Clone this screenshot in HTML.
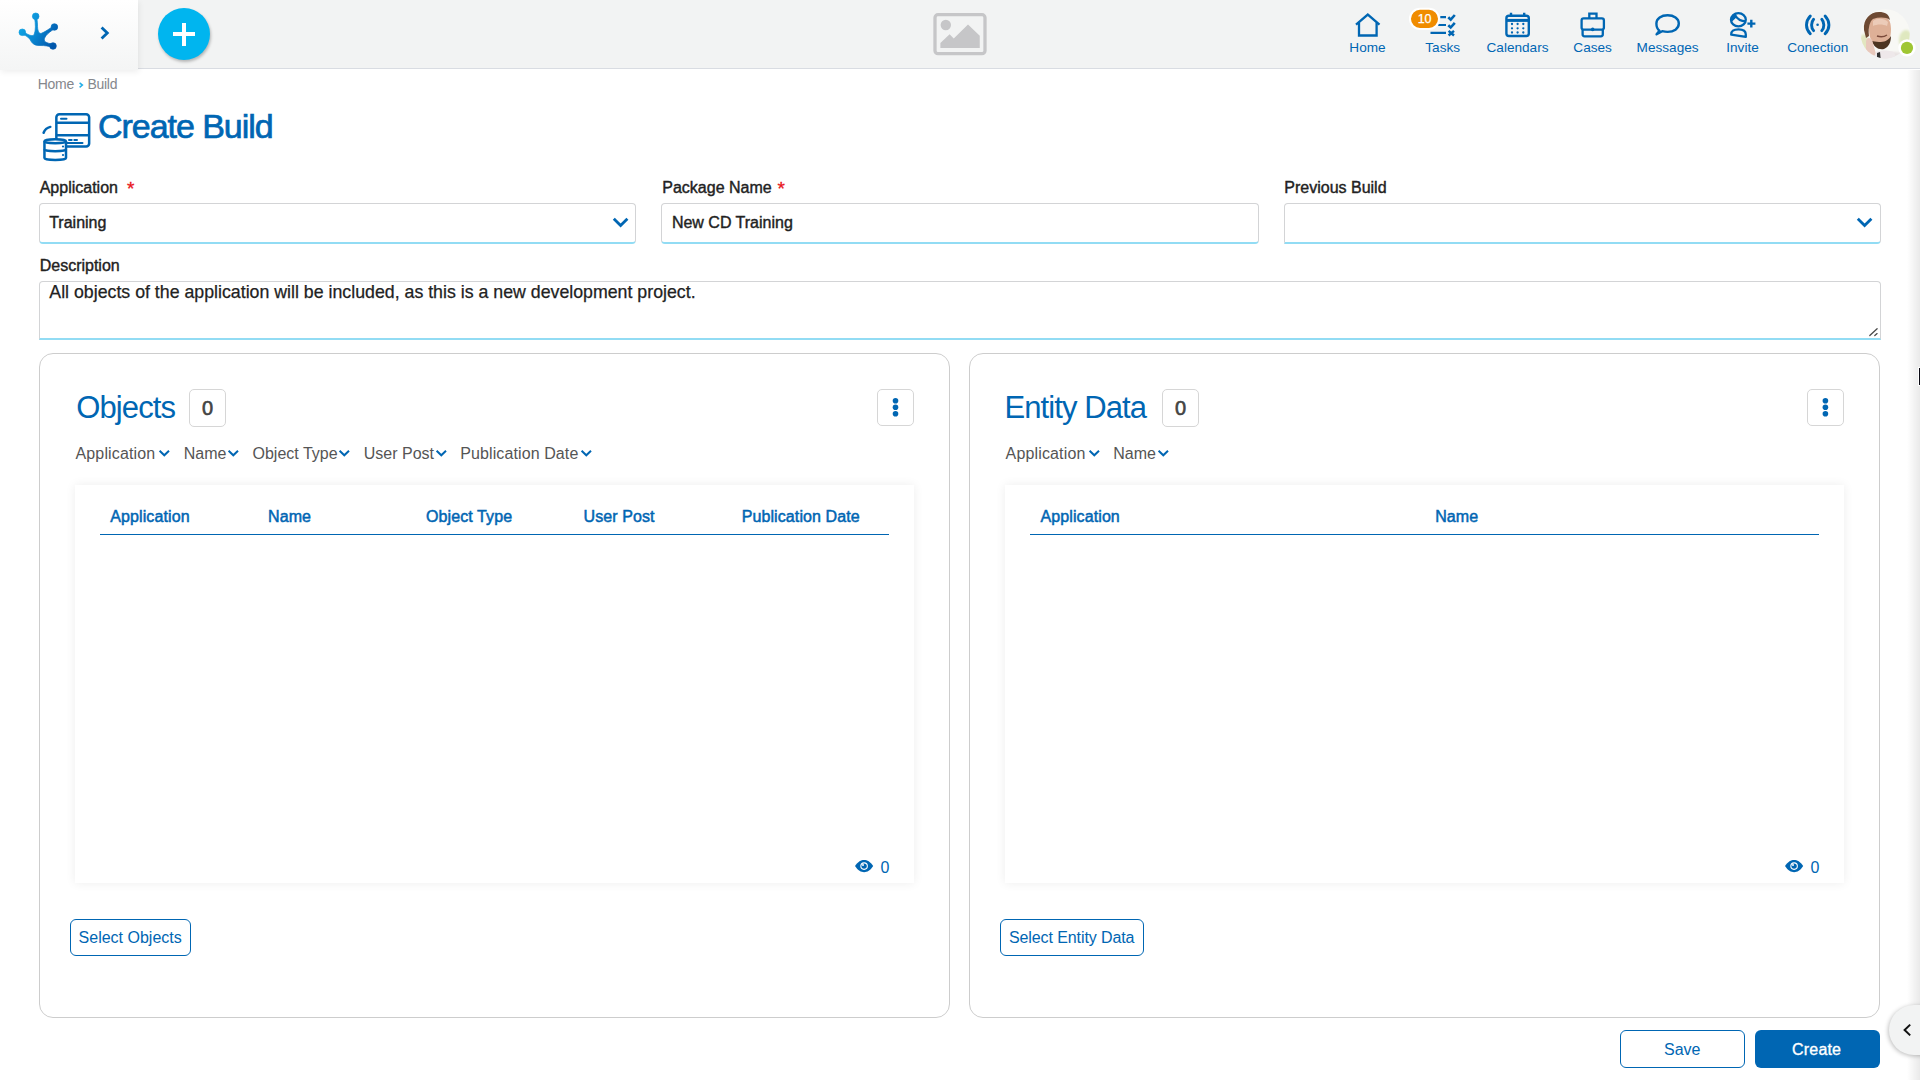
<!DOCTYPE html>
<html><head><meta charset="utf-8">
<style>
*{box-sizing:border-box;margin:0;padding:0}
html,body{width:1920px;height:1080px;overflow:hidden;background:#fff;font-family:"Liberation Sans",sans-serif}
.a{position:absolute}
.t{position:absolute;line-height:1;white-space:nowrap}
.hdr{left:0;top:0;width:1920px;height:69px;background:#f2f3f3;border-bottom:1px solid #d9dce2}
.logo{left:0;top:0;width:138px;height:70px;background:linear-gradient(#ffffff,#f4f5f5);box-shadow:1px 2px 6px rgba(0,0,0,0.07)}
.nav{color:#0066b3;font-size:13.6px;text-align:center;width:75px;margin-left:-37.5px}
.lbl{color:#222;font-size:16px;-webkit-text-stroke:0.4px #222;letter-spacing:0px}
.inp{background:#fff;border:1px solid #d3d4d6;border-bottom:2px solid #92dcf4;border-radius:4px}
.val{color:#222;font-size:16px;-webkit-text-stroke:0.4px #222;letter-spacing:0px}
.panel{border:1px solid #cdcdcd;border-radius:14px;background:#fff}
.ptitle{color:#0066b3;font-size:31px;letter-spacing:-0.9px}
.badge{border:1px solid #d6d6d6;border-radius:5px;background:#fff}
.flt{color:#555;font-size:16px}
.th{color:#0066b3;font-size:16px;-webkit-text-stroke:0.5px #0066b3;letter-spacing:0.1px}
.card{background:#fff;box-shadow:0 0 10px rgba(0,0,0,0.075)}
.btn{border:1.5px solid #0066b3;border-radius:6px;background:#fff}
.btxt{color:#0066b3;font-size:16px}
</style></head><body>

<div class="a hdr"></div>
<div class="a logo"></div>
<div class="a" style="left:158px;top:8px;width:52px;height:52px;border-radius:50%;background:#00b5ef;box-shadow:1px 2px 3px rgba(0,0,0,0.25)"></div>

<!-- nav labels -->
<div class="t nav" style="left:1367.5px;top:40.6px">Home</div>
<div class="t nav" style="left:1442.7px;top:40.6px">Tasks</div>
<div class="t nav" style="left:1517.5px;top:40.6px">Calendars</div>
<div class="t nav" style="left:1592.6px;top:40.6px">Cases</div>
<div class="t nav" style="left:1667.6px;top:40.6px">Messages</div>
<div class="t nav" style="left:1742.5px;top:40.6px">Invite</div>
<div class="t nav" style="left:1817.8px;top:40.6px">Conection</div>

<!-- breadcrumb -->
<div class="t" style="left:37.8px;top:77px;font-size:14px;letter-spacing:-0.3px;color:#85878d">Home</div>
<div class="t" style="left:87.5px;top:77px;font-size:14px;letter-spacing:-0.3px;color:#85878d">Build</div>

<!-- title -->
<div class="t" style="left:98px;top:108.6px;font-size:34px;color:#0066b3;-webkit-text-stroke:0.7px #0066b3;letter-spacing:-1.05px">Create Build</div>

<!-- form -->
<div class="t lbl" style="left:39.7px;top:179.5px">Application</div>
<div class="t" style="left:127px;top:179px;font-size:19px;color:#e8141a;-webkit-text-stroke:0.3px #e8141a">*</div>
<div class="a inp" style="left:39px;top:203px;width:597px;height:41px"></div>
<div class="t val" style="left:49.2px;top:214.5px">Training</div>

<div class="t lbl" style="left:662.3px;top:179.5px">Package Name</div>
<div class="t" style="left:777.5px;top:179px;font-size:19px;color:#e8141a;-webkit-text-stroke:0.3px #e8141a">*</div>
<div class="a inp" style="left:661px;top:203px;width:598px;height:41px"></div>
<div class="t val" style="left:671.9px;top:214.5px">New CD Training</div>

<div class="t lbl" style="left:1284.3px;top:179.5px">Previous Build</div>
<div class="a inp" style="left:1284px;top:203px;width:597px;height:41px;border-bottom-left-radius:0"></div>

<div class="t lbl" style="left:39.7px;top:257.9px">Description</div>
<div class="a inp" style="left:39px;top:281px;width:1842px;height:59px;border-bottom-left-radius:0;border-bottom-right-radius:0"></div>
<div class="t" style="left:49.3px;top:284.3px;font-size:17.75px;color:#222;-webkit-text-stroke:0.25px #222">All objects of the application will be included, as this is a new development project.</div>

<!-- panels -->
<div class="a panel" style="left:39px;top:353px;width:911px;height:665px"></div>
<div class="a panel" style="left:969px;top:353px;width:911px;height:665px"></div>

<!-- Objects panel -->
<div class="t ptitle" style="left:76.3px;top:392px">Objects</div>
<div class="a badge" style="left:189px;top:389px;width:37px;height:38px"></div>
<div class="t" style="left:202px;top:398px;font-size:20px;color:#444;-webkit-text-stroke:0.6px #444">0</div>
<div class="a badge" style="left:877px;top:389px;width:37px;height:37px"></div>

<div class="t flt" style="left:75.5px;top:445.5px;letter-spacing:0.15px">Application</div>
<div class="t flt" style="left:183.8px;top:445.5px">Name</div>
<div class="t flt" style="left:252.5px;top:445.5px">Object Type</div>
<div class="t flt" style="left:363.8px;top:445.5px">User Post</div>
<div class="t flt" style="left:460.3px;top:445.5px;letter-spacing:0.1px">Publication Date</div>

<div class="a card" style="left:74.5px;top:484.5px;width:839px;height:398px"></div>
<div class="t th" style="left:110.3px;top:509.2px">Application</div>
<div class="t th" style="left:268px;top:509.2px">Name</div>
<div class="t th" style="left:426px;top:509.2px">Object Type</div>
<div class="t th" style="left:583.5px;top:509.2px">User Post</div>
<div class="t th" style="left:741.7px;top:509.2px">Publication Date</div>
<div class="a" style="left:100px;top:533.8px;width:789px;height:1.5px;background:#0066b3"></div>
<div class="t" style="left:880.5px;top:860.2px;font-size:16px;color:#0066b3">0</div>

<div class="a btn" style="left:70px;top:919px;width:121px;height:37px"></div>
<div class="t btxt" style="left:78.6px;top:930.2px">Select Objects</div>

<!-- Entity panel -->
<div class="t ptitle" style="left:1004.4px;top:392px">Entity Data</div>
<div class="a badge" style="left:1162px;top:389px;width:37px;height:38px"></div>
<div class="t" style="left:1175px;top:398px;font-size:20px;color:#444;-webkit-text-stroke:0.6px #444">0</div>
<div class="a badge" style="left:1807px;top:389px;width:37px;height:37px"></div>

<div class="t flt" style="left:1005.6px;top:445.5px;letter-spacing:0.15px">Application</div>
<div class="t flt" style="left:1113.3px;top:445.5px">Name</div>

<div class="a card" style="left:1004.5px;top:484.5px;width:839px;height:398px"></div>
<div class="t th" style="left:1040.5px;top:509.2px">Application</div>
<div class="t th" style="left:1435.2px;top:509.2px">Name</div>
<div class="a" style="left:1030px;top:533.8px;width:789px;height:1.5px;background:#0066b3"></div>
<div class="t" style="left:1810.5px;top:860.2px;font-size:16px;color:#0066b3">0</div>

<div class="a btn" style="left:1000px;top:919px;width:144px;height:37px"></div>
<div class="t btxt" style="left:1009px;top:930.2px;letter-spacing:-0.1px">Select Entity Data</div>

<!-- bottom buttons -->
<div class="a btn" style="left:1620px;top:1030px;width:125px;height:38px"></div>
<div class="t btxt" style="left:1664px;top:1041.5px">Save</div>
<div class="a" style="left:1755px;top:1030px;width:125px;height:38px;background:#0066b3;border-radius:6px"></div>
<div class="t" style="left:1792px;top:1041.5px;font-size:16px;color:#fff;letter-spacing:0.2px;-webkit-text-stroke:0.35px #fff">Create</div>

<!-- right edge shadow -->
<div class="a" style="left:1907px;top:70px;width:13px;height:1010px;background:linear-gradient(90deg,rgba(0,0,0,0),rgba(0,0,0,0.085))"></div>
<div class="a" style="left:1889px;top:1005px;width:60px;height:50px;border-radius:25px;background:#f2f3f3;box-shadow:-1px 1px 4px rgba(0,0,0,0.25)"></div>

<!-- all icons -->
<svg class="a" style="left:0;top:0" width="1920" height="1080" viewBox="0 0 1920 1080">
<defs>
<linearGradient id="lg" gradientUnits="userSpaceOnUse" x1="20" y1="20" x2="56" y2="40">
<stop offset="0" stop-color="#10aae8"/><stop offset="0.5" stop-color="#0a86d0"/><stop offset="1" stop-color="#0056ab"/>
</linearGradient>
<clipPath id="avc"><circle cx="1885.2" cy="33.8" r="24.6"/></clipPath>
</defs>
<!-- logo -->
<g fill="url(#lg)" stroke="url(#lg)" stroke-width="0.7" stroke-linejoin="round">
<circle cx="35.7" cy="16.3" r="3.3"/>
<circle cx="54.4" cy="27" r="3.3"/>
<circle cx="22.3" cy="32.3" r="3.3"/>
<circle cx="53" cy="46" r="3.3"/>
<path d="M34.6 18 C35.5 24 36 30 34 35 C31 37 27 33.5 23 32 L22 34.5 C27 35.5 29.5 38 31.5 42 C33.5 45 36.5 45.5 40 45.5 C45 45.5 49 46 52 47.5 L53.5 44.5 C50 43.5 46 43 44.5 41 C43.5 38 46.5 33.5 55 28.5 L53.5 26 C49 29 45 32 41 33.5 C38.5 33.5 37.5 30 37.5 25 C37.5 22 37 19.5 36.8 18 Z"/>
</g>
<!-- chevron -->
<path d="M101.6 27.6 L107.3 33.1 L101.6 38.6" fill="none" stroke="#0066b3" stroke-width="2.8"/>
<!-- plus -->
<rect x="173" y="32" width="22" height="4" fill="#fff"/>
<rect x="182" y="23" width="4" height="23" fill="#fff"/>
<!-- image placeholder -->
<rect x="935" y="14.7" width="50" height="39" rx="3" fill="none" stroke="#c6c6c8" stroke-width="3.3"/>
<circle cx="945.8" cy="25" r="5.2" fill="#c6c6c8"/>
<path d="M940.4 48 L940.4 42.9 L949.6 34.2 L953.75 38.5 L968 24.6 L979.75 35.8 L979.75 48 Z" fill="#c6c6c8"/>
<!-- nav icons -->
<g fill="none" stroke="#0066b3" stroke-width="2.3">
<!-- home -->
<path d="M1356 24.6 L1367.8 14.6 L1379.5 24.6"/>
<path d="M1359 22.5 V35.5 H1376.6 V22.5"/>
<!-- tasks -->
<path d="M1440.3 17.1 H1446 M1438.2 25 H1446 M1430.5 32.9 H1446" stroke-width="2.2"/>
<path d="M1448.3 17.3 L1450.7 19.6 L1454.8 15 M1448.3 25.2 L1450.7 27.5 L1454.8 22.9" stroke-width="2.6"/>
<path d="M1448.6 30.8 L1454 35.5 M1454 30.8 L1448.6 35.5" stroke-width="2.4"/>
<!-- calendar -->
<rect x="1506.4" y="15.7" width="22.4" height="20.3" rx="2.5" stroke-width="2.4"/>
<path d="M1506.4 20.4 H1528.8" stroke-width="3"/>
<path d="M1511 12.8 V17 M1524.2 12.8 V17" stroke-width="2.4"/>
<!-- cases -->
<rect x="1581.6" y="18.4" width="22.3" height="11.2" rx="2" stroke-width="2.3"/>
<path d="M1582.6 29.5 V34.3 Q1582.6 36.3 1584.6 36.3 H1600.8 Q1602.8 36.3 1602.8 34.3 V29.5"/>
<path d="M1589.3 18 V13.6 H1596.5 V18"/>
<!-- messages -->
<path d="M1659.5 30.8 C1656.5 28.8 1656.4 26.2 1656.4 23.6 C1656.4 18.5 1661.4 15.3 1667.6 15.3 C1673.8 15.3 1678.8 18.5 1678.8 23.6 C1678.8 28.7 1673.8 31.9 1667.6 31.9 C1665.5 31.9 1663.8 31.6 1662.2 31.2 L1656.6 34.3 Z" stroke-width="2.4" stroke-linejoin="round"/>
<!-- invite -->
<ellipse cx="1738.4" cy="19.7" rx="7.4" ry="6.6" stroke-width="2.3"/>
<path d="M1734.5 14.3 C1737 19 1741 21.4 1746 21.4" stroke-width="2.3"/>
<path d="M1731.2 34.6 C1731 31 1733.5 29.3 1738.5 29.3 C1743.5 29.3 1745.8 31 1745.8 34.5 L1745.8 36.9 Z" stroke-width="2.3" stroke-linejoin="round"/>
<path d="M1751.3 19.8 V27.5 M1747.4 23.6 H1755.4" stroke-width="2.4"/>
<!-- conection -->
<path d="M1813.6 19.3 C1810.9 22.5 1810.9 27.4 1813.6 30.6 M1821.8 19.3 C1824.5 22.5 1824.5 27.4 1821.8 30.6" stroke-width="2.9" stroke-linecap="round"/>
<path d="M1810.3 16 C1805.2 21.5 1805.2 28.4 1810.3 33.8 M1825.1 16 C1830.2 21.5 1830.2 28.4 1825.1 33.8" stroke-width="2.9" stroke-linecap="round"/>
</g>
<g fill="#0066b3">
<circle cx="1817.6" cy="24.8" r="1.3"/>
<circle cx="1512" cy="24" r="1.15"/><circle cx="1517.6" cy="24" r="1.15"/><circle cx="1523.3" cy="24" r="1.15"/>
<circle cx="1512" cy="28.3" r="1.15"/><circle cx="1517.6" cy="28.3" r="1.15"/><circle cx="1523.3" cy="28.3" r="1.15"/>
<circle cx="1512" cy="32.5" r="1.15"/><circle cx="1517.6" cy="32.5" r="1.15"/><circle cx="1523.3" cy="32.5" r="1.15"/>
<circle cx="1592.7" cy="29.4" r="1.8"/>
<path d="M1730.8 21.8 C1730.6 17.5 1732.5 14.5 1735.2 13.3 L1736.6 17.2 C1735 18.8 1733 20.5 1731.2 22.2 Z"/>
</g>
<!-- badge -->
<rect x="1410" y="8.8" width="29" height="20.1" rx="10" fill="#f08c00" stroke="#fff" stroke-width="2"/>

<!-- avatar -->
<defs>
<filter id="blr" x="-20%" y="-20%" width="140%" height="140%"><feGaussianBlur stdDeviation="1.2"/></filter>
<filter id="blr2" x="-20%" y="-20%" width="140%" height="140%"><feGaussianBlur stdDeviation="0.6"/></filter>
</defs>
<g clip-path="url(#avc)">
<rect x="1858" y="7" width="54" height="54" fill="#f8f8f5"/>
<g filter="url(#blr)">
<ellipse cx="1906" cy="40" rx="7" ry="10" fill="#dfe8bf"/>
<ellipse cx="1864" cy="44" rx="5" ry="10" fill="#e2e6c0"/>
<ellipse cx="1894" cy="58" rx="14" ry="6" fill="#e8e2e2"/>
</g>
<g filter="url(#blr2)">
<path d="M1869 27 C1869 20 1874 16 1881 16 C1888 16 1891 21 1891 29 C1891 37 1889 44 1884 47 C1878 49 1873 46 1871 40 C1869 35 1869 31 1869 27 Z" fill="#deb097"/>
<path d="M1873 21 C1877 18 1884 18 1888 22 L1887 26 C1883 24 1877 24 1873 26 Z" fill="#eccbb8"/>
<path d="M1864 30 C1863 19 1870 12 1879 12 C1885 12 1889 14 1890 20 C1886 17 1879 17 1873 19 C1870 21 1868 27 1869 36 L1866 38 Z" fill="#6e4a33"/>
<path d="M1872 41 C1874 47 1878 50 1884 49 C1889 47 1891 42 1891 36 C1888 41 1884 42 1879 42 C1876 42 1873 41 1872 41 Z" fill="#4e3424"/>
<path d="M1877 36 C1880 37 1884 37 1887 35" stroke="#7a4a3a" stroke-width="1.5" fill="none"/>
<path d="M1866 42 C1866 37 1870 37 1872 40 L1876 54 C1874 58 1868 58 1866 51 Z" fill="#e8c8bc"/>
<path d="M1876 52 C1881 50 1888 50 1894 52 L1898 62 L1872 62 Z" fill="#eee8ea"/>
<path d="M1877 53 L1880 52 L1881 62 L1877 62 Z" fill="#333"/>
</g>
</g>
<circle cx="1907" cy="47.9" r="8.7" fill="#fff"/>
<circle cx="1907" cy="47.9" r="6.1" fill="#9fc633"/>
<!-- breadcrumb chevron -->
<path d="M79.6 82.8 L82.4 85.1 L79.6 87.4" fill="none" stroke="#22aee8" stroke-width="1.5"/>
<!-- build icon -->
<g fill="none" stroke="#0066b3">
<rect x="56.35" y="114.25" width="32.8" height="32.3" rx="3" stroke-width="2.5"/>
<path d="M56.35 122.75 H89.15 M56.35 135.25 H89.15" stroke-width="2.5"/>
<path d="M61 118.8 H66.5 M69 140 H71.7 M74.3 140 H77 M67 143 H82.5" stroke-width="2" stroke-linecap="round"/>
<path d="M43.6 132.8 A 9.5 9.5 0 0 1 50.3 126.9" stroke-width="2.5" stroke-linecap="round"/>
<path d="M44.45 141.2 V157.9 C44.45 160.6 66 160.6 66 157.9 V141.2 C66 138.6 44.45 138.6 44.45 141.2 Z" fill="#fff" stroke-width="2.5"/>
<path d="M44.45 141.2 C44.45 143.8 66 143.8 66 141.2 M44.45 149.2 C44.45 151.8 66 151.8 66 149.2" stroke-width="2.5"/>
</g>
<circle cx="63" cy="146.5" r="1.1" fill="#0066b3"/>
<circle cx="63" cy="155" r="1.1" fill="#0066b3"/>
<!-- select chevrons -->
<path d="M613.8 218.8 L620.6 225.6 L627.4 218.8 M1857.8 218.8 L1864.6 225.6 L1871.4 218.8" fill="none" stroke="#0066b3" stroke-width="2.8"/>
<!-- textarea resize -->
<path d="M1869.8 335.6 L1877.1 328.8 M1874.8 335.6 L1877.1 333.6" stroke="#4a4a4a" stroke-width="1.3" stroke-linecap="round"/>
<!-- filter chevrons -->
<g fill="none" stroke="#0066b3" stroke-width="2">
<path d="M159.6 450.8 L164.3 455.3 L169 450.8"/>
<path d="M228.6 450.8 L233.3 455.3 L238 450.8"/>
<path d="M339.6 450.8 L344.3 455.3 L349 450.8"/>
<path d="M436.6 450.8 L441.3 455.3 L446 450.8"/>
<path d="M581.6 450.8 L586.3 455.3 L591 450.8"/>
<path d="M1089.6 450.8 L1094.3 455.3 L1099 450.8"/>
<path d="M1158.6 450.8 L1163.3 455.3 L1168 450.8"/>
</g>
<!-- kebab dots -->
<g fill="#0066b3">
<circle cx="895.5" cy="400.7" r="2.8"/><circle cx="895.5" cy="407.2" r="2.8"/><circle cx="895.5" cy="413.7" r="2.8"/>
<circle cx="1825.4" cy="400.7" r="2.8"/><circle cx="1825.4" cy="407.2" r="2.8"/><circle cx="1825.4" cy="413.7" r="2.8"/>
</g>
<!-- eyes -->
<g>
<path d="M855 866.1 C858 861.5 861 860 864.1 860 C867.2 860 870.2 861.5 873.2 866.1 C870.2 870.7 867.2 872.2 864.1 872.2 C861 872.2 858 870.7 855 866.1 Z" fill="#0066b3"/>
<circle cx="864.1" cy="866.1" r="3.8" fill="#fff"/><circle cx="864.1" cy="866.1" r="2.7" fill="#0066b3"/><circle cx="863" cy="865" r="1" fill="#fff"/>
<path d="M1785 866.1 C1788 861.5 1791 860 1794.1 860 C1797.2 860 1800.2 861.5 1803.2 866.1 C1800.2 870.7 1797.2 872.2 1794.1 872.2 C1791 872.2 1788 870.7 1785 866.1 Z" fill="#0066b3"/>
<circle cx="1794.1" cy="866.1" r="3.8" fill="#fff"/><circle cx="1794.1" cy="866.1" r="2.7" fill="#0066b3"/><circle cx="1793" cy="865" r="1" fill="#fff"/>
</g>
<!-- collapse chevron -->
<path d="M1910.2 1024.6 L1904.6 1030 L1910.2 1035.4" fill="none" stroke="#111" stroke-width="2"/>
<!-- cursor -->
<rect x="1918" y="367" width="2" height="19" fill="#fff"/><rect x="1919" y="368" width="1" height="17" fill="#0a0a14"/>
</svg>
<div class="t" style="left:1417.8px;top:12.6px;font-size:12.5px;color:#fff;-webkit-text-stroke:0.25px #fff;letter-spacing:-0.2px">10</div>

</body></html>
